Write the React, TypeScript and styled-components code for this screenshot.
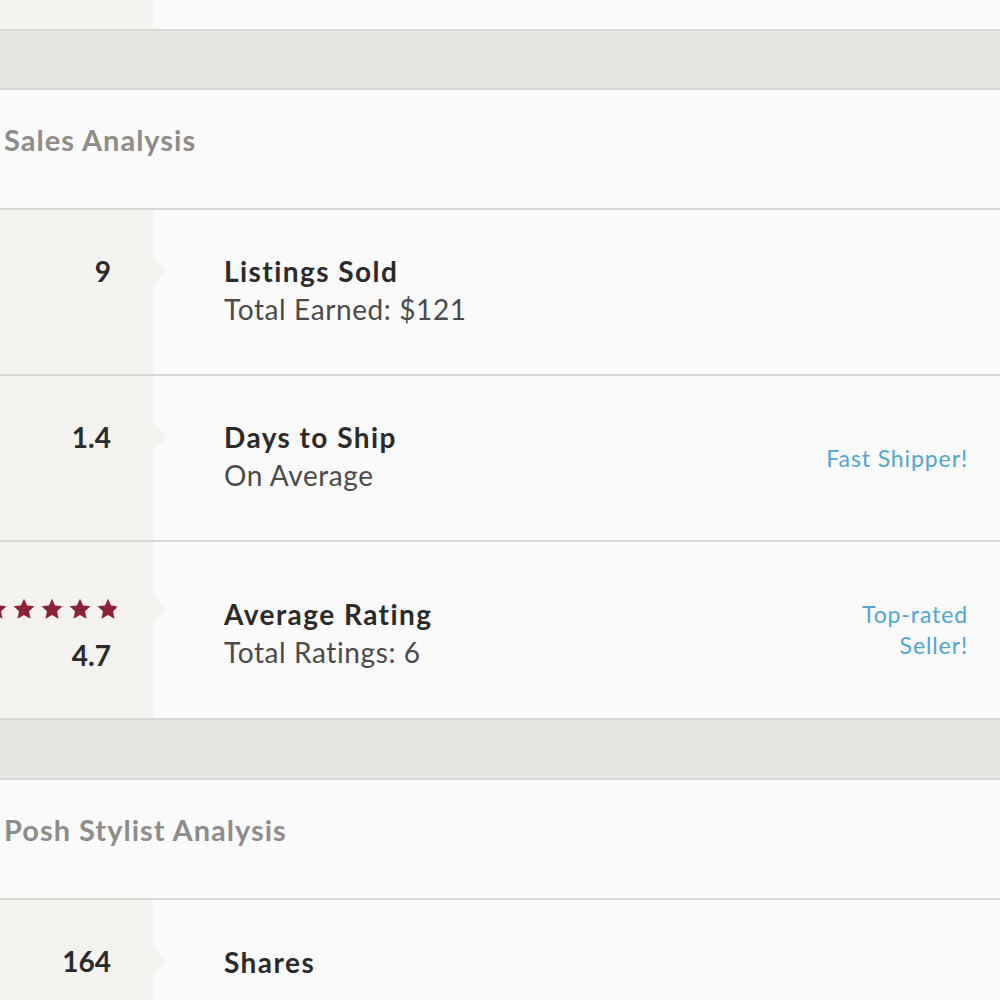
import React from 'react';
import styled, { createGlobalStyle } from 'styled-components';

const GlobalStyle = createGlobalStyle`
  html, body {
    margin: 0;
    padding: 0;
    height: 100%;
    overflow: hidden;
    background: #fbfafa;
  }
  body {
    font-family: 'Lato', 'Open Sans', sans-serif;
    -webkit-font-smoothing: antialiased;
  }
`;

const Page = styled.div`
  display: flex;
  flex-direction: column;
  width: 1000px;
`;

const Row = styled.div`
  display: flex;
  align-items: stretch;
  background: #fbfafa;
  border-bottom: 2px solid #d9d5d2;
`;

const ValueCell = styled.div`
  width: 153px;
  flex-shrink: 0;
  background: #f4f2ef;
  display: flex;
  flex-direction: column;
  justify-content: flex-start;
  padding: 44px 0 46px;
  box-sizing: border-box;
`;

const ValueLine = styled.div<{ $gap?: number }>`
  position: relative;
  text-align: right;
  padding-right: 42px;
  margin-top: ${p => p.$gap ?? 0}px;
  font-size: 28px;
  font-weight: 700;
  color: #2a2a2a;
  line-height: 34px;
`;

// little tab pointing from the value column into the content
const Notch = styled.span`
  position: absolute;
  left: 100%;
  top: 50%;
  width: 0;
  height: 0;
  transform: translateY(-50%);
  border-top: 14px solid transparent;
  border-bottom: 14px solid transparent;
  border-left: 14px solid #f4f2ef;
`;

const Body = styled.div`
  flex: 1;
  display: flex;
  align-items: center;
  justify-content: space-between;
  padding: 44px 32px 44px 71px;
`;

const Text = styled.div<{ $shift?: number }>`
  display: flex;
  flex-direction: column;
  margin-top: ${p => p.$shift ?? 0}px;
`;

const Title = styled.div`
  font-size: 28px;
  font-weight: 700;
  color: #2a2a2a;
  line-height: 34px;
  letter-spacing: 1.45px;
`;

const Sub = styled.div`
  font-size: 28px;
  font-weight: 400;
  color: #4a4a4a;
  line-height: 42px;
  letter-spacing: 0.6px;
`;

const Badge = styled.div`
  font-size: 23px;
  color: #4ea6cf;
  text-align: right;
  line-height: 31px;
  letter-spacing: 0.9px;
`;

const Band = styled.div<{ $h: number }>`
  height: ${p => p.$h}px;
  background: #e9e7e3;
  border-bottom: 2px solid #d9d5d2;
`;

const TopStrip = styled.div`
  display: flex;
  height: 29px;
  border-bottom: 2px solid #d9d5d2;
  &::before {
    content: '';
    width: 153px;
    background: #f4f2ef;
  }
`;

const SectionHead = styled.div`
  height: 86px;
  padding: 32px 0 0 4px;
  font-size: 29px;
  line-height: 36px;
  font-weight: 700;
  letter-spacing: 1px;
  color: #8e8c89;
  background: #fbfafa;
  border-bottom: 2px solid #d9d5d2;
`;

const Stars = styled.div`
  position: relative;
  display: flex;
  justify-content: flex-end;
  align-items: center;
  gap: 6px;
  height: 34px;
  margin-top: 6px;
  padding-right: 34px;
  margin-left: -30px;
`;

const Star = ({ fill = 1 }: { fill?: number }) => {
  const id = `sg${Math.round(fill * 100)}`;
  return (
    <svg width="22" height="22" viewBox="0 0 24 24">
      <defs>
        <linearGradient id={id}>
          <stop offset={fill} stopColor="#8a2236" />
          <stop offset={fill} stopColor="#a8a2a0" />
        </linearGradient>
      </defs>
      <path
        d="M12 0.8L15.41 8.11 23.41 9.09 17.52 14.59 19.05 22.51 12 18.6 4.95 22.51 6.48 14.59 0.59 9.09 8.59 8.11Z"
        fill={`url(#${id})`}
      />
    </svg>
  );
};

type Stat = {
  value?: string;
  rating?: string;
  title: string;
  sub?: string;
  badge?: string[];
};

const sales: Stat[] = [
  { value: '9', title: 'Listings Sold', sub: 'Total Earned: $121' },
  { value: '1.4', title: 'Days to Ship', sub: 'On Average', badge: ['Fast Shipper!'] },
  { rating: '4.7', title: 'Average Rating', sub: 'Total Ratings: 6', badge: ['Top-rated', 'Seller!'] },
];

const stylist: Stat[] = [{ value: '164', title: 'Shares' }];

function StatRow({ s }: { s: Stat }) {
  return (
    <Row>
      <ValueCell>
        {s.rating ? (
          <>
            <Stars>
              <Star />
              <Star />
              <Star />
              <Star />
              <Star fill={0.88} />
              <Notch />
            </Stars>
            <ValueLine $gap={12}>{s.rating}</ValueLine>
          </>
        ) : (
          <ValueLine>
            {s.value}
            <Notch />
          </ValueLine>
        )}
      </ValueCell>
      <Body>
        <Text $shift={s.rating ? 10 : 0}>
          <Title>{s.title}</Title>
          {s.sub && <Sub>{s.sub}</Sub>}
        </Text>
        {s.badge && (
          <Badge>
            {s.badge.map(b => (
              <div key={b}>{b}</div>
            ))}
          </Badge>
        )}
      </Body>
    </Row>
  );
}

export default function App() {
  return (
    <Page>
      <GlobalStyle />
      <TopStrip />
      <Band $h={57} />
      <SectionHead>Sales Analysis</SectionHead>
      {sales.map(s => (
        <StatRow key={s.title} s={s} />
      ))}
      <Band $h={58} />
      <SectionHead>Posh Stylist Analysis</SectionHead>
      {stylist.map(s => (
        <StatRow key={s.title} s={s} />
      ))}
    </Page>
  );
}
